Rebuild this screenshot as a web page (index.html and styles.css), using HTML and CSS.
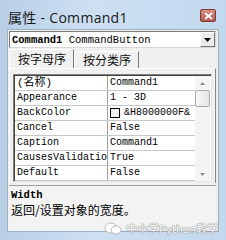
FILE: index.html
```html
<!DOCTYPE html>
<html>
<head>
<meta charset="utf-8">
<link rel="stylesheet" href="styles.css">
</head>
<body>
<div class="window">
  <div class="titlebar">
    <span class="title">属性 - Command1</span>
    <span class="close"><svg width="9" height="8" viewBox="0 0 9 8"><path d="M1 1L8 7M8 1L1 7" stroke="#fff" stroke-width="1.8"/></svg></span>
  </div>
  <div class="panel">
    <div class="combo">
      <span class="combo-text"><b>Command1</b> CommandButton</span>
      <span class="combo-btn"><svg width="7" height="4" viewBox="0 0 7 4"><path d="M0 0H7L3.5 4Z" fill="#000"/></svg></span>
    </div>
    <div class="tabs">
      <span class="tab active">按字母序</span>
      <span class="tab">按分类序</span>
    </div>
    <div class="page">
      <div class="grid">
        <div class="rows">
          <div class="row"><span class="k cjk">(名称)</span><span class="v">Command1</span></div>
          <div class="row"><span class="k">Appearance</span><span class="v">1 - 3D</span></div>
          <div class="row"><span class="k">BackColor</span><span class="v"><i class="swatch"></i>&amp;H8000000F&amp;</span></div>
          <div class="row"><span class="k">Cancel</span><span class="v">False</span></div>
          <div class="row"><span class="k">Caption</span><span class="v">Command1</span></div>
          <div class="row"><span class="k">CausesValidation</span><span class="v">True</span></div>
          <div class="row"><span class="k">Default</span><span class="v">False</span></div>
        </div>
        <div class="scroll">
          <span class="arrow"><svg width="5" height="3" viewBox="0 0 5 3"><path d="M0 3H5L2.5 0Z" fill="#888"/></svg></span>
          <span class="thumb"></span>
          <span class="track"></span>
          <span class="arrow"><svg width="5" height="3" viewBox="0 0 5 3"><path d="M0 0H5L2.5 3Z" fill="#888"/></svg></span>
        </div>
      </div>
    </div>
    <div class="desc">
      <div class="desc-name">Width</div>
      <div class="desc-text">返回/设置对象的宽度。</div>
    </div>
  </div>
  <div class="mark"><svg width="18" height="13" viewBox="0 0 18 13"><ellipse cx="7" cy="6" rx="6" ry="5" fill="#fff" stroke="#bbb" stroke-width="1"/><ellipse cx="12" cy="8" rx="5" ry="4" fill="#fff" stroke="#bbb" stroke-width="1"/></svg><span>中小学Python教学</span></div>
</div>
</body>
</html>
```

FILE: styles.css
```css
* { box-sizing: border-box; }
html, body { margin: 0; padding: 0; }
body { width: 226px; height: 240px; overflow: hidden; background: #c6daee; }
.window {
  position: relative;
  width: 226px; height: 240px; overflow: hidden;
  background: linear-gradient(90deg, #b9cfe6 0%, #cde0f2 40%, #c2d8ee 100%);
  display: flex; flex-direction: column;
}
.titlebar {
  flex-shrink: 0;
  height: 29px; display: flex; align-items: center; justify-content: space-between;
  padding: 0 10px 0 8px;
}
.title {
  font-family: "Open Sans", "Noto Sans CJK SC", sans-serif; font-size: 14px; color: #1a1a1a;
  letter-spacing: 0.3px; margin-top: 4px;
}
.close {
  width: 16px; height: 13px; margin-top: 2px;
  background: linear-gradient(#d98f86, #b7574d);
  border: 1px solid #7f3a33; border-radius: 2px;
  display: flex; align-items: center; justify-content: center;
}
.panel {
  flex: 1; min-height: 0; margin: 0 7px 8px 7px; background: #f0f0f0;
  display: flex; flex-direction: column; padding: 1px 2px 0 1px;
  border: 1px solid #9fb0c2;
}
.combo {
  flex-shrink: 0;
  height: 17px; background: #fff; border: 1px solid #7a7a7a;
  border-right-color: #d8d8d8; border-bottom-color: #d8d8d8;
  display: flex; align-items: center; justify-content: space-between;
  padding-left: 2px;
}
.combo-text { font-family: "Liberation Mono", monospace; font-size: 10.5px; color: #000; white-space: nowrap; }
.combo-btn {
  width: 15px; height: 15px; background: #ececec;
  border: 1px solid #fff; border-right-color: #777; border-bottom-color: #777;
  display: flex; align-items: center; justify-content: center;
}
.tabs { flex-shrink: 0; display: flex; margin-top: 1px; height: 19px; align-items: flex-end; }
.tab {
  font-family: "Noto Sans CJK SC", sans-serif; font-size: 12px; line-height: 16px; color: #111;
  padding: 0 7px 0 8px; border: 1px solid #fff; border-right-color: #777; border-bottom: none;
  height: 17px;
}
.tab.active { height: 19px; padding: 1px 7px 0 8px; background: #f0f0f0; }
.page {
  flex-shrink: 0;
  border: 1px solid #fff; border-right-color: #888; border-bottom: none; border-top-color: #fff;
  padding: 5px 3px 1px 3px;
}
.grid {
  display: flex; background: #fff;
  border: 1px solid #808080; border-right-color: #e4e4e4; border-bottom-color: #e4e4e4;
  box-shadow: inset 1px 1px 0 #404040;
  padding: 1px 1px 0 1px;
}
.rows { flex: 1; }
.row {
  display: flex; height: 15px; border-bottom: 1px solid #c8c8c8;
  font-family: "Liberation Mono", monospace; font-size: 10px; line-height: 14px; color: #000;
}
.k { width: 93px; flex-shrink: 0; padding-left: 2px; border-right: 1px solid #a0a0a0; overflow: hidden; white-space: nowrap; }
.cjk { font-family: "Liberation Mono", "Noto Sans CJK SC", monospace; font-size: 11px; }
.v { padding-left: 2px; white-space: nowrap; display: flex; align-items: center; }
.swatch { display: inline-block; width: 10px; height: 10px; border: 1px solid #000; background: #f0f0f0; margin-right: 4px; }
.scroll { width: 15px; display: flex; flex-direction: column; background: #f4f4f4; }
.arrow { height: 14px; display: flex; align-items: center; justify-content: center; }
.thumb { height: 17px; background: linear-gradient(90deg, #f6f6f6, #e6e6e6); border: 1px solid #aaa; border-radius: 2px; }
.track { flex: 1; }
.desc {
  flex: 1; margin-top: 2px; border-top: 1px solid #a0a0a0; padding: 4px 3px 0 2px;
  display: flex; flex-direction: column; background: #f3f3f3;
}
.desc-name { font-family: "Liberation Mono", monospace; font-weight: bold; font-size: 10.5px; line-height: 11px; color: #000; }
.desc-text { font-family: "Noto Sans CJK SC", sans-serif; font-size: 12px; line-height: 17px; color: #000; }
.mark {
  position: absolute; right: 8px; bottom: 4px;
  display: flex; align-items: center; gap: 4px;
  font-family: "Noto Sans CJK SC", sans-serif; font-size: 11px; color: #fff;
  text-shadow: 0 0 1px #777, 0 0 1px #777;
}
```
